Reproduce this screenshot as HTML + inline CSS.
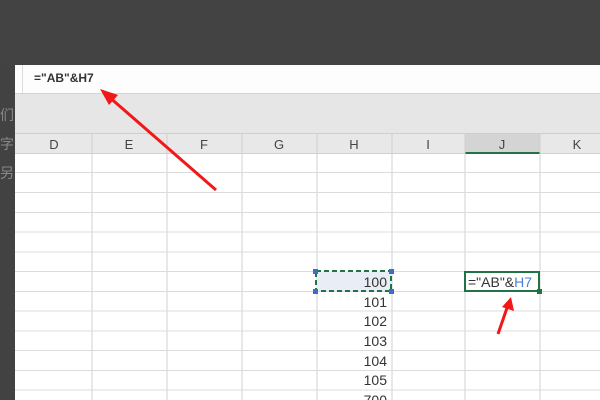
<!DOCTYPE html><html><head><style>
body{margin:0;width:600px;height:400px;overflow:hidden;background:#424242;position:relative;font-family:"Liberation Sans","Noto Sans CJK SC",sans-serif}
.a{position:absolute}
</style></head><body>
<div class="a" style="left:0;top:0;width:600px;height:65px;background:#434343"></div>
<div class="a" style="left:0;top:101px;width:15px;font-size:14px;color:#888;line-height:29px">们<br>字<br>另</div>
<div class="a" style="left:15px;top:65px;width:585px;height:335px;background:#fff"></div>
<div class="a" style="left:15px;top:65px;width:585px;height:28px;background:#fdfdfd;border-bottom:1px solid #d4d4d4"></div>
<div class="a" style="left:22px;top:65px;width:1px;height:28px;background:#ddd"></div>
<div class="a" style="left:34px;top:71px;font-size:12px;color:#333;font-weight:bold;letter-spacing:0">="AB"&amp;H7</div>
<div class="a" style="left:15px;top:94px;width:585px;height:39px;background:#e6e6e6;border-bottom:1px solid #cfcfcf"></div>
<div class="a" style="left:15px;top:134px;width:585px;height:19px;background:#e8e8e8;border-bottom:1px solid #d0d0d0"></div>
<div class="a" style="left:465px;top:134px;width:75px;height:18px;background:#d4d4d4;border-bottom:2px solid #217346"></div>
<svg class="a" style="left:0;top:0" width="600" height="400">
<g font-size="13" fill="#444" text-anchor="middle" font-family="Liberation Sans">
<text x="54" y="149">D</text><text x="129" y="149">E</text><text x="204" y="149">F</text><text x="279" y="149">G</text><text x="354" y="149">H</text><text x="428" y="149">I</text><text x="502" y="149">J</text><text x="577" y="149">K</text></g>
<g stroke="#d0d0d0" stroke-width="1">
<line x1="92" y1="134" x2="92" y2="400"/><line x1="167" y1="134" x2="167" y2="400"/><line x1="242" y1="134" x2="242" y2="400"/><line x1="317" y1="134" x2="317" y2="400"/><line x1="392" y1="134" x2="392" y2="400"/><line x1="465" y1="134" x2="465" y2="400"/><line x1="540" y1="134" x2="540" y2="400"/></g>
<g stroke="#dcdcdc" stroke-width="1">
<line x1="15" x2="600" y1="172.5" y2="172.5"/><line x1="15" x2="600" y1="192.5" y2="192.5"/><line x1="15" x2="600" y1="212.5" y2="212.5"/><line x1="15" x2="600" y1="232" y2="232"/><line x1="15" x2="600" y1="252" y2="252"/><line x1="15" x2="600" y1="271.5" y2="271.5"/><line x1="15" x2="600" y1="291.5" y2="291.5"/><line x1="15" x2="600" y1="311" y2="311"/><line x1="15" x2="600" y1="331" y2="331"/><line x1="15" x2="600" y1="350.5" y2="350.5"/><line x1="15" x2="600" y1="370.5" y2="370.5"/><line x1="15" x2="600" y1="390" y2="390"/></g>
<rect x="316" y="271" width="75" height="20" fill="#e9eef6"/>
<rect x="316" y="271" width="75" height="20" fill="none" stroke="#217346" stroke-width="2" stroke-dasharray="5,3"/>
<g fill="#3b6fc4"><rect x="313" y="269" width="5" height="5"/><rect x="389" y="269" width="5" height="5"/><rect x="313" y="289" width="5" height="5"/><rect x="389" y="289" width="5" height="5"/></g>
<g font-size="14" fill="#333" text-anchor="end" font-family="Liberation Sans">
<text x="387" y="287">100</text><text x="387" y="307">101</text><text x="387" y="326">102</text><text x="387" y="346">103</text><text x="387" y="366">104</text><text x="387" y="385">105</text><text x="387" y="405">700</text></g>
<rect x="465" y="272" width="74" height="19" fill="#fff" stroke="#217346" stroke-width="2"/>
<rect x="537" y="289" width="5" height="5" fill="#217346"/>
<text x="468" y="287" font-size="14" fill="#333" font-family="Liberation Sans">="AB"&amp;<tspan fill="#4a7fd6">H7</tspan></text>
<g stroke="#f01818" stroke-width="3" fill="#f01818">
<line x1="216" y1="190" x2="108" y2="96"/><polygon points="100,89 118,95 109,105" stroke="none"/>
<line x1="498" y1="334" x2="508" y2="305"/><polygon points="511,297 514,311 502,307" stroke="none"/></g>
</svg>
</body></html>
